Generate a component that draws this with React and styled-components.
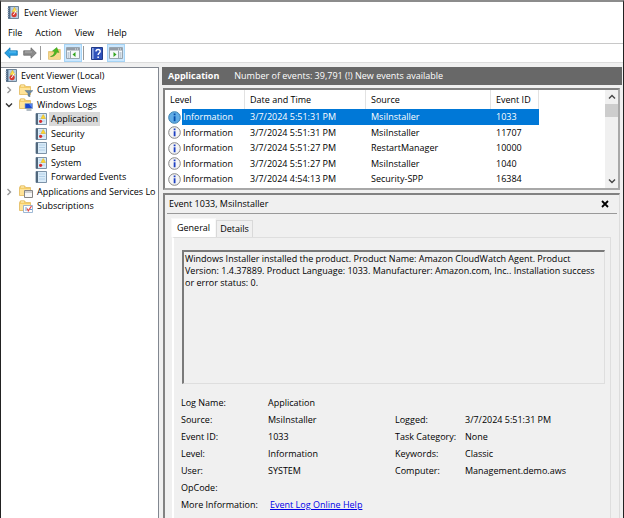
import React from 'react';
import styled, { createGlobalStyle } from 'styled-components';

const GlobalStyle = createGlobalStyle`
  * {
    box-sizing: border-box;
  }

  body {
    margin: 0;
    background: #f0f0f0;
  }

  body, button, textarea {
    font-family: "Open Sans", "Noto Sans", sans-serif;
    font-size: 9px;
    line-height: 12px;
    color: #000;
  }

  button {
    padding: 0;
    border: 0;
    background: none;
  }

  svg {
    display: block;
    flex: none;
  }
`;

const Window = styled.div`
  display: flex;
  flex-direction: column;
  height: 100vh;
  overflow: hidden;
  background: #f0f0f0;
  border: 1px solid #222;
  border-top: 2px solid #8c8c8c;
  border-bottom: 0;
`;

const TitleBar = styled.header`
  display: flex;
  align-items: center;
  gap: 5px;
  height: 21px;
  padding-left: 6px;
  background: white;
`;

const MenuBar = styled.nav`
  display: flex;
  align-items: center;
  gap: 13px;
  height: 20px;
  padding-left: 7px;
  background: white;
`;

const ToolBar = styled.div`
  display: flex;
  align-items: center;
  gap: 1px;
  height: 20px;
  padding-left: 1px;
  background: white;
  border-top: 1px solid #c8c8c8;
  border-bottom: 1px solid #dcdcdc;
`;

const ToolButton = styled.button`
  display: flex;
  align-items: center;
  justify-content: center;
  width: 18px;
  height: 18px;
  background: ${(props) => (props.$active ? '#cce8ff' : 'transparent')};
  border: 1px solid ${(props) => (props.$active ? '#a6d4f5' : 'transparent')};
`;

const ToolDivider = styled.span`
  width: 1px;
  height: 14px;
  margin-right: 3px;
  background: #999;
`;

const Body = styled.div`
  display: flex;
  flex: 1;
  min-height: 0;
  gap: 3px;
  padding-top: 4px;
`;

const TreePane = styled.aside`
  flex: none;
  width: 158px;
  overflow: hidden;
  background: white;
  border-top: 1px solid #828790;
  border-right: 1px solid #828790;
`;

const Tree = styled.ul`
  margin: 0;
  padding: 0;
  list-style: none;
`;

const TreeRow = styled.li`
  display: flex;
  align-items: center;
  gap: 2px;
  height: 14px;
  padding-left: ${(props) => [4, 4, 34][props.$depth]}px;
  white-space: nowrap;

  &:nth-child(odd) {
    height: 15px;
  }
`;

const Twisty = styled.span`
  display: flex;
  width: 12px;
  flex: none;
`;

const TreeLabel = styled.span`
  padding: 1px 2px;
  background: ${(props) => (props.$selected ? '#d9d9d9' : 'transparent')};
`;

const Main = styled.main`
  display: flex;
  flex: 1;
  flex-direction: column;
  min-width: 0;
  padding-right: 1px;
`;

const Summary = styled.div`
  display: flex;
  flex: none;
  align-items: center;
  gap: 15px;
  height: 18px;
  margin-bottom: 3px;
  padding-left: 6px;
  color: white;
  background: #686868;
`;

const ListPane = styled.section`
  display: flex;
  flex: none;
  height: 102px;
  margin: 0 2px 3px 1px;
  overflow: hidden;
  background: white;
  border: 2px solid #828282;
  border-right-color: #a8a8a8;
  border-bottom-color: #a8a8a8;
`;

const ListScroll = styled.div`
  flex: 1;
  overflow: hidden;
`;

const EventTable = styled.table`
  width: 374px;
  table-layout: fixed;
  border-spacing: 0;

  th {
    height: 19px;
    padding: 0 5px;
    font-weight: normal;
    text-align: left;
    white-space: nowrap;
    border-right: 1px solid #e2e2e2;
  }
`;

const EventRow = styled.tr`
  height: 15px;

  &:nth-child(odd) {
    height: 16px;
  }

  td {
    padding: 0 5px;
    white-space: nowrap;
    color: ${(props) => (props.$selected ? 'white' : '#000')};
    background: ${(props) => (props.$selected ? '#0078d7' : 'white')};
  }

  td:first-child {
    padding: 0 0 0 3px;
    background: ${(props) =>
      props.$selected ? 'linear-gradient(to right, white 17px, #0078d7 17px)' : 'white'};
  }
`;

const LevelCell = styled.div`
  display: flex;
  align-items: center;
  gap: 2px;
`;

const ScrollBar = styled.div`
  display: flex;
  flex-direction: column;
  flex: none;
  width: 13px;
  background: #f0f0f0;
`;

const ScrollArrow = styled.button`
  display: flex;
  align-items: center;
  justify-content: center;
  height: 14px;
`;

const ScrollTrack = styled.div`
  flex: 1;
`;

const ScrollThumb = styled.div`
  height: 13px;
  background: #cdcdcd;
`;

const DetailPane = styled.section`
  display: flex;
  flex: 1;
  flex-direction: column;
  margin: 0 2px 0 1px;
  border: 2px solid #828282;
  border-right: 1px solid #dcdcdc;
  border-bottom: 0;
`;

const DetailHeader = styled.div`
  display: flex;
  align-items: center;
  justify-content: space-between;
  height: 19px;
  margin: 0 2px;
  padding: 0 8px 0 2px;
  border-bottom: 1px solid #999;
`;

const Tabs = styled.div`
  display: flex;
  align-items: flex-end;
  height: 23px;
  padding-left: 6px;
`;

const Tab = styled.button`
  height: ${(props) => (props.$active ? 19 : 17)}px;
  padding: 0 ${(props) => (props.$active ? 5 : 3)}px;
  background: ${(props) => (props.$active ? 'white' : '#f0f0f0')};
  border: 1px solid ${(props) => (props.$active ? '#f8f8f8' : '#d9d9d9')};
  border-bottom: 0;
`;

const TabPanel = styled.div`
  flex: 1;
  margin: 0 8px 0 7px;
  padding: 12px 5px 0 8px;
  border: 1px solid #dedede;
  border-left: 2px solid #fff;
  border-bottom: 0;
`;

const Message = styled.textarea`
  display: block;
  width: 100%;
  height: 134px;
  padding: 1px;
  background: #f0f0f0;
  border: 2px solid #7a7a7a;
  border-right: 1px solid #dedede;
  border-bottom: 1px solid #dedede;
  border-radius: 0;
  outline: 0;
  overflow: hidden;
  resize: none;
`;

const Properties = styled.dl`
  display: grid;
  grid-template-columns: 87px 127px 70px 1fr;
  grid-auto-rows: 17px;
  align-items: center;
  margin: 10px 0 0 -1px;
  white-space: nowrap;

  dd {
    margin: 0;
  }
`;

const Label = styled.dt`
  grid-column: ${(props) => props.$column || 1};
`;

const HelpLink = styled.a`
  margin-left: 2px;
  color: #0000e8;
  text-decoration: underline;
`;

const LogIcon = ({ plain = false }) => (
  <svg width="12" height="12" viewBox="0 0 12 12">
    <path d="M1 .5h10.5v11H1z" fill="#d9ebf8" stroke="#7d93a8" />
    <path d="M1 .5h2v11H1z" fill="#50677c" />
    <path d="M4 3h6M4 5.5h6M4 8h6" stroke="#b4d0e8" />
    {!plain && (
      <>
        <path d="M8.2 1.5l2.3 4H6z" fill="#ffd72c" stroke="#e0b020" strokeWidth=".5" />
        <circle cx="5.6" cy="8.3" r="1.6" fill="#d92c2c" />
      </>
    )}
  </svg>
);

const ViewerIcon = () => (
  <svg width="12" height="13" viewBox="0 0 12 13">
    <path d="M1.5.5h10v12h-10z" fill="#b7cee3" stroke="#6f8598" />
    <path d="M1 .5h2.4v12H1z" fill="#526c88" />
    <path d="M0 2.5h2M0 4.5h2M0 6.5h2M0 8.5h2M0 10.5h2" stroke="#b9c5cf" strokeWidth=".6" />
    <path d="M7.5 1.2l2.6 4.6H5z" fill="#ffe04c" stroke="#d9a81c" strokeWidth=".5" />
    <circle cx="7.1" cy="8.6" r="2.6" fill="#d83b32" />
    <path d="M9.3 4.4L6.4 9" stroke="#fff" />
  </svg>
);

const FolderIcon = ({ kind }) => (
  <svg width="14" height="13" viewBox="0 0 14 13">
    <path d="M.5 2.5v8h11v-8H6.8L5.5.8h-4z" fill="#f4cd68" stroke="#dfb558" strokeWidth=".7" />
    <path d="M1 4h10v6H1z" fill="#ffe398" />
    <path d="M2 2h3" stroke="#fff3c9" />
    {kind === 'filter' && <path d="M6 6.5h8l-3 3V13l-2-1V9.5z" fill="#6d8aa4" stroke="#4c667c" strokeWidth=".4" />}
    {kind === 'monitor' && (
      <>
        <path d="M6 5.5h7.5v5H6z" fill="#1746cf" stroke="#8ba3bd" strokeWidth=".7" />
        <path d="M10 6h3v4z" fill="#5585ef" />
        <path d="M7.5 12h5" stroke="#657888" />
      </>
    )}
    {kind === 'window' && (
      <>
        <path d="M5.5 5.5h8v7h-8z" fill="#f7f7f7" stroke="#858585" />
        <path d="M6 7h7" stroke="#aaa" />
      </>
    )}
    {kind === 'calendar' && (
      <>
        <path d="M4.5 5.5h9v7h-9z" fill="#fff" stroke="#85a7ca" strokeWidth=".8" />
        <path d="M6 8h2M6 10h2M11 9.5h2" stroke="#6e9ed6" />
        <path d="M8 8.5l1.3 2.3L12.5 6" fill="none" stroke="#e24949" strokeWidth="1.2" />
      </>
    )}
  </svg>
);

const ArrowIcon = ({ forward }) => (
  <svg width="14" height="12" viewBox="0 0 14 12">
    <path
      d={forward ? 'M13.3 6L8 .8v3H.7v4.4H8v3z' : 'M.7 6L6 .8v3h7.3v4.4H6v3z'}
      fill={forward ? '#8b8b8b' : '#28a0e4'}
      stroke={forward ? '#6c6c6c' : '#147ab5'}
      strokeWidth=".8"
    />
    <path d={forward ? 'M2 5h7' : 'M5 5h7'} stroke={forward ? '#b0b0b0' : '#63c2f3'} />
  </svg>
);

const UpFolderIcon = () => (
  <svg width="13" height="13" viewBox="0 0 13 13">
    <path d="M.5 4.5h6l1-2h4.8v9.8H.5z" fill="#f2d078" stroke="#dfbb68" strokeWidth=".7" />
    <path d="M1 6h11v6H1z" fill="#f7d98e" />
    <path d="M2.5 9.5C5 9 6.3 7 6.7 4.5L4.5 4 8.8.5l2 5-1.9-.4C8 8 5.5 10 2.5 9.5z" fill="#4cb91f" stroke="#36951b" strokeWidth=".5" />
  </svg>
);

const PanelIcon = ({ right }) => (
  <svg width="14" height="12" viewBox="0 0 14 12">
    <path d="M.5.5h13v11H.5z" fill="#f5f8fa" stroke="#98a5af" />
    <path d="M1 1h12v2.5H1z" fill="#939ca6" />
    <path d="M9 2h1M11 2h1" stroke="#e5e9ed" />
    <path d={right ? 'M9.5 4v7.5' : 'M4.5 4v7.5'} stroke="#98a5af" />
    <path d={right ? 'M4.5 5l3 2.5-3 2.5z' : 'M9.5 5l-3 2.5 3 2.5z'} fill="#31a51d" />
    <path d={right ? 'M10.5 6h2M10.5 8h2M10.5 10h2' : 'M1.5 6h2M1.5 8h2M1.5 10h2'} stroke="#8aa2b8" />
  </svg>
);

const HelpIcon = () => (
  <svg width="12" height="13" viewBox="0 0 12 13">
    <path d="M.5.5h11v12H.5z" fill="#2f52bb" stroke="#213a88" />
    <path d="M1 1h1.7v11H1z" fill="#8fa8e2" />
    <path d="M5 4.4C5 1.7 9.2 1.9 9.2 4.4 9.2 6 7.1 6.1 7.1 8" fill="none" stroke="#fff" strokeWidth="1.4" />
    <path d="M6.4 9.4h1.5v1.5H6.4z" fill="#fff" />
  </svg>
);

const InfoIcon = ({ selected }) => (
  <svg width="13" height="13" viewBox="0 0 13 13">
    <circle cx="6.5" cy="6.5" r="5.8" fill={selected ? '#61ace6' : '#f5f5f5'} stroke={selected ? '#397fae' : '#858585'} />
    <path
      d="M5.7 2.5h1.8v1.7H5.7zM5.7 5.2h1.8v5H5.7z"
      fill={selected ? '#064eaa' : '#1d3fc2'}
    />
  </svg>
);

const Chevron = ({ direction, color = '#444' }) => {
  const paths = {
    right: 'M2.5 1l3 3-3 3',
    down: 'M1 2.5l3 3 3-3',
    up: 'M1 5.5l3-3 3 3',
  };
  return (
    <svg width="8" height="8" viewBox="0 0 8 8">
      <path d={paths[direction]} fill="none" stroke={color} strokeWidth="1.4" />
    </svg>
  );
};

const CloseIcon = () => (
  <svg width="8" height="8" viewBox="0 0 8 8">
    <path d="M1 1l6 6M7 1L1 7" stroke="#000" strokeWidth="1.8" />
  </svg>
);

const treeItems = [
  { label: 'Event Viewer (Local)', depth: 0, icon: <ViewerIcon /> },
  { label: 'Custom Views', depth: 1, arrow: 'right', icon: <FolderIcon kind="filter" /> },
  { label: 'Windows Logs', depth: 1, arrow: 'down', icon: <FolderIcon kind="monitor" /> },
  { label: 'Application', depth: 2, selected: true, icon: <LogIcon /> },
  { label: 'Security', depth: 2, icon: <LogIcon /> },
  { label: 'Setup', depth: 2, icon: <LogIcon plain /> },
  { label: 'System', depth: 2, icon: <LogIcon /> },
  { label: 'Forwarded Events', depth: 2, icon: <LogIcon plain /> },
  { label: 'Applications and Services Lo', depth: 1, arrow: 'right', icon: <FolderIcon kind="window" /> },
  { label: 'Subscriptions', depth: 1, icon: <FolderIcon kind="calendar" /> },
];

const events = [
  ['Information', '3/7/2024 5:51:31 PM', 'MsiInstaller', '1033'],
  ['Information', '3/7/2024 5:51:31 PM', 'MsiInstaller', '11707'],
  ['Information', '3/7/2024 5:51:27 PM', 'RestartManager', '10000'],
  ['Information', '3/7/2024 5:51:27 PM', 'MsiInstaller', '1040'],
  ['Information', '3/7/2024 4:54:13 PM', 'Security-SPP', '16384'],
  ['', '', '', ''],
];

const properties = [
  ['Log Name:', 'Application'],
  ['Source:', 'MsiInstaller', 'Logged:', '3/7/2024 5:51:31 PM'],
  ['Event ID:', '1033', 'Task Category:', 'None'],
  ['Level:', 'Information', 'Keywords:', 'Classic'],
  ['User:', 'SYSTEM', 'Computer:', 'Management.demo.aws'],
  ['OpCode:', ''],
];

const message =
  'Windows Installer installed the product. Product Name: Amazon CloudWatch Agent. Product Version: 1.4.37889. Product Language: 1033. Manufacturer: Amazon.com, Inc.. Installation success or error status: 0.';

const App = () => {
  return (
    <Window>
      <GlobalStyle />
      <TitleBar>
        <ViewerIcon />
        <span>Event Viewer</span>
      </TitleBar>
      <MenuBar>
        {['File', 'Action', 'View', 'Help'].map((item) => (
          <button key={item}>{item}</button>
        ))}
      </MenuBar>
      <ToolBar>
        <ToolButton aria-label="Back"><ArrowIcon /></ToolButton>
        <ToolButton aria-label="Forward"><ArrowIcon forward /></ToolButton>
        <ToolDivider />
        <ToolButton aria-label="Up one level"><UpFolderIcon /></ToolButton>
        <ToolButton aria-label="Console tree" $active><PanelIcon /></ToolButton>
        <ToolDivider />
        <ToolButton aria-label="Help"><HelpIcon /></ToolButton>
        <ToolButton aria-label="Action pane" $active><PanelIcon right /></ToolButton>
      </ToolBar>
      <Body>
        <TreePane>
          <Tree>
            {treeItems.map((item) => (
              <TreeRow key={item.label} $depth={item.depth}>
                {item.depth === 1 && (
                  <Twisty>
                    {item.arrow && (
                      <Chevron direction={item.arrow} color={item.arrow === 'right' ? '#999' : '#333'} />
                    )}
                  </Twisty>
                )}
                {item.icon}
                <TreeLabel $selected={item.selected}>{item.label}</TreeLabel>
              </TreeRow>
            ))}
          </Tree>
        </TreePane>
        <Main>
          <Summary>
            <strong>Application</strong>
            <span>Number of events: 39,791 (!) New events available</span>
          </Summary>
          <ListPane>
            <ListScroll>
              <EventTable>
                <colgroup>
                  <col width="80" />
                  <col width="121" />
                  <col width="125" />
                  <col width="48" />
                </colgroup>
                <thead>
                  <tr>
                    <th>Level</th>
                    <th>Date and Time</th>
                    <th>Source</th>
                    <th>Event ID</th>
                  </tr>
                </thead>
                <tbody>
                  {events.map(([level, date, source, id], index) => (
                    <EventRow key={index} $selected={index === 0}>
                      <td>
                        <LevelCell>
                          <InfoIcon selected={index === 0} />
                          <span>{level}</span>
                        </LevelCell>
                      </td>
                      <td>{date}</td>
                      <td>{source}</td>
                      <td>{id}</td>
                    </EventRow>
                  ))}
                </tbody>
              </EventTable>
            </ListScroll>
            <ScrollBar>
              <ScrollArrow aria-label="Scroll up"><Chevron direction="up" /></ScrollArrow>
              <ScrollTrack><ScrollThumb /></ScrollTrack>
              <ScrollArrow aria-label="Scroll down"><Chevron direction="down" /></ScrollArrow>
            </ScrollBar>
          </ListPane>
          <DetailPane>
            <DetailHeader>
              <span>Event 1033, MsiInstaller</span>
              <button aria-label="Close"><CloseIcon /></button>
            </DetailHeader>
            <Tabs role="tablist">
              <Tab role="tab" aria-selected="true" $active>General</Tab>
              <Tab role="tab" aria-selected="false">Details</Tab>
            </Tabs>
            <TabPanel role="tabpanel">
              <Message aria-label="Event description" readOnly value={message} />
              <Properties>
                {properties.map(([label, value, label2, value2]) => (
                  <React.Fragment key={label}>
                    <Label>{label}</Label>
                    <dd>{value}</dd>
                    {label2 && (
                      <>
                        <Label $column={3}>{label2}</Label>
                        <dd>{value2}</dd>
                      </>
                    )}
                  </React.Fragment>
                ))}
                <Label>More Information:</Label>
                <dd><HelpLink href="#help">Event Log Online Help</HelpLink></dd>
              </Properties>
            </TabPanel>
          </DetailPane>
        </Main>
      </Body>
    </Window>
  );
};

export default App;
